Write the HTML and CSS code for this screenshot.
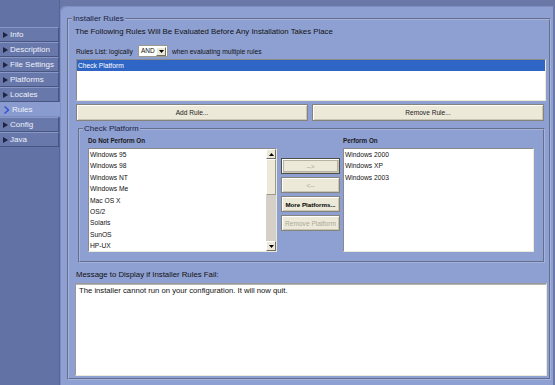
FILE: index.html
```html
<!DOCTYPE html>
<html lang="en">

<head>
    <meta charset="UTF-8">
    <meta name="viewport" content="width=device-width, initial-scale=1.0">
    <title>Installer Rules</title>
    <link rel="stylesheet" href="styles.css">
</head>

<body>
    <div class="app">
        <nav class="sidebar">
            <ul class="nav-list">
                <li class="nav-item"><span class="nav-arrow"></span>Info</li>
                <li class="nav-item"><span class="nav-arrow"></span>Description</li>
                <li class="nav-item"><span class="nav-arrow"></span>File Settings</li>
                <li class="nav-item"><span class="nav-arrow"></span>Platforms</li>
                <li class="nav-item"><span class="nav-arrow"></span>Locales</li>
                <li class="nav-item active">
                    <svg class="nav-open" width="5" height="8" viewBox="0 0 5 8">
                        <path d="M0.5 0.5 L4.5 4 L0.5 7.5" fill="none" stroke="#2f4fd8" stroke-width="1.3"/>
                    </svg>Rules
                </li>
                <li class="nav-item"><span class="nav-arrow"></span>Config</li>
                <li class="nav-item"><span class="nav-arrow"></span>Java</li>
            </ul>
        </nav>

        <main class="panel">
            <fieldset class="group rules-group">
                <legend>Installer Rules</legend>

                <p class="intro">The Following Rules Will Be Evaluated Before Any Installation Takes Place</p>

                <div class="logic-row">
                    <span>Rules List: logically</span>
                    <span class="combo">
                        <span class="combo-value">AND</span>
                        <span class="combo-btn">
                            <svg width="5" height="3" viewBox="0 0 5 3"><path d="M0 0 H5 L2.5 3 Z" fill="#000"/></svg>
                        </span>
                    </span>
                    <span>when evaluating multiple rules</span>
                </div>

                <div class="listbox rules-list">
                    <div class="list-row selected">Check Platform</div>
                </div>

                <div class="btn-row">
                    <button class="btn">Add Rule...</button>
                    <button class="btn">Remove Rule...</button>
                </div>

                <fieldset class="group platform-group">
                    <legend>Check Platform</legend>
                    <div class="platform-grid">
                        <div class="platform-col">
                            <div class="col-label">Do Not Perform On</div>
                            <div class="listbox platform-list">
                                <div class="list-items">
                                    <div class="list-row">Windows 95</div>
                                    <div class="list-row">Windows 98</div>
                                    <div class="list-row">Windows NT</div>
                                    <div class="list-row">Windows Me</div>
                                    <div class="list-row">Mac OS X</div>
                                    <div class="list-row">OS/2</div>
                                    <div class="list-row">Solaris</div>
                                    <div class="list-row">SunOS</div>
                                    <div class="list-row">HP-UX</div>
                                </div>
                                <div class="scrollbar">
                                    <div class="scroll-btn">
                                        <svg width="5" height="3" viewBox="0 0 5 3"><path d="M0 3 H5 L2.5 0 Z" fill="#000"/></svg>
                                    </div>
                                    <div class="scroll-thumb"></div>
                                    <div class="scroll-track"></div>
                                    <div class="scroll-btn">
                                        <svg width="5" height="3" viewBox="0 0 5 3"><path d="M0 0 H5 L2.5 3 Z" fill="#000"/></svg>
                                    </div>
                                </div>
                            </div>
                        </div>

                        <div class="move-buttons">
                            <button class="btn small default" disabled>--&gt;</button>
                            <button class="btn small" disabled>&lt;--</button>
                            <button class="btn small strong">More Platforms...</button>
                            <button class="btn small" disabled>Remove Platform</button>
                        </div>

                        <div class="platform-col">
                            <div class="col-label">Perform On</div>
                            <div class="listbox platform-list">
                                <div class="list-items">
                                    <div class="list-row">Windows 2000</div>
                                    <div class="list-row">Windows XP</div>
                                    <div class="list-row">Windows 2003</div>
                                </div>
                            </div>
                        </div>
                    </div>
                </fieldset>

                <div class="message-label">Message to Display if Installer Rules Fail:</div>
                <div class="message-box">The installer cannot run on your configuration. It will now quit.</div>
            </fieldset>
        </main>
    </div>
</body>

</html>
```

FILE: styles.css
```css
* {
    margin: 0;
    padding: 0;
    box-sizing: border-box;
}

body {
    width: 555px;
    height: 385px;
    overflow: hidden;
    background: #6a78a8;
    font-family: 'Liberation Sans', Arial, sans-serif;
    color: #111;
}

.app {
    display: grid;
    grid-template-columns: 60px 1fr;
    height: 385px;
}

/* left navigation */

.sidebar {
    background: #6272a4;
    padding-top: 27px;
    box-shadow: inset -1px 0 0 #55639a;
}

.nav-list {
    list-style: none;
}

.nav-item {
    display: flex;
    align-items: center;
    gap: 2px;
    width: 59px;
    height: 15px;
    padding-left: 3px;
    background: #6878aa;
    border-top: 1px solid #8797c7;
    border-bottom: 1px solid #48557f;
    border-right: 1px solid #48557f;
    color: #eef1fb;
    font-size: 8px;
    white-space: nowrap;
}

.nav-arrow {
    width: 0;
    height: 0;
    border-left: 5px solid #1f2440;
    border-top: 3.5px solid transparent;
    border-bottom: 3.5px solid transparent;
}

.nav-item.active {
    width: 60px;
    padding-left: 4px;
    gap: 3px;
    background: #8a9bcf;
    border-right: none;
    border-top-color: #8a9bcf;
    border-bottom-color: #7b8cc0;
}

/* main panel */

.panel {
    margin: 6px 2px 0 0;
    padding: 8px 2px 0 7px;
    background: #8ea0d2;
    border-top-left-radius: 6px;
    box-shadow: inset 1px 1px 0 #7c8ec2;
}

.group {
    border: 2px groove #a4b3dd;
    padding: 0;
    min-width: 0;
}

.group legend {
    margin-left: 3px;
    padding: 0 1px;
    font-size: 8px;
    line-height: 10px;
    color: #1d2340;
}

.rules-group {
    padding-bottom: 2px;
}

.intro {
    margin: 3px 0 0 6px;
    font-size: 7.8px;
    line-height: 10px;
}

.logic-row {
    display: flex;
    align-items: center;
    gap: 4px;
    height: 12px;
    margin: 8px 0 0 7px;
    font-size: 6.7px;
}

.logic-row > span:first-child {
    width: 58px;
}

.combo {
    display: flex;
    align-items: flex-start;
    width: 30px;
    height: 12px;
    background: #fff;
    border: 1px solid #9c9a8c;
    padding: 1px;
}

.combo-value {
    flex: 1;
    padding-left: 1px;
    font-size: 6.5px;
    line-height: 7px;
}

.combo-btn {
    display: flex;
    align-items: center;
    justify-content: center;
    width: 10px;
    height: 9px;
    background: #ece9d8;
    border: 1px solid;
    border-color: #fff #716f64 #716f64 #fff;
}

.listbox {
    background: #fff;
    border: 1px solid;
    border-color: #8a8a8a #ece9d8 #ece9d8 #8a8a8a;
}

.list-row {
    padding-left: 1px;
    font-size: 6.7px;
    line-height: 11.4px;
    white-space: nowrap;
}

.rules-list {
    height: 42px;
    margin: 2px 3px 0 7px;
}

.rules-list .list-row {
    background: #2f66c6;
    color: #fff;
    line-height: 11px;
}

.btn-row {
    display: grid;
    grid-template-columns: 1fr 1fr;
    gap: 4px;
    margin: 3px 5px 0 7px;
}

.btn {
    height: 17px;
    background: #ece9d8;
    border: 1px solid #85837a;
    box-shadow: inset 1px 1px 0 #fff, inset -1px -1px 0 #c8c5b4;
    font-family: 'Liberation Sans', Arial, sans-serif;
    font-size: 6.6px;
    color: #222;
}

.btn:disabled {
    color: #aca899;
}

.btn.small {
    height: 16px;
    width: 59px;
    white-space: nowrap;
    padding: 0;
}

.btn.default {
    border-color: #4e4d46;
    box-shadow: inset 1px 1px 0 #fff, inset -1px -1px 0 #c8c5b4, inset 0 0 0 2px #b6b3a3;
}

.btn.strong {
    color: #000;
    font-weight: bold;
    font-size: 6.2px;
}

/* check platform group */

.platform-group {
    margin: 3px 4px 0 9px;
}

.platform-grid {
    display: grid;
    grid-template-columns: 189px 59px 190px;
    column-gap: 4px;
    padding: 2px 9px 9px 8px;
}

.platform-grid > :last-child {
    margin-left: -1px;
}

.platform-col {
    display: flex;
    flex-direction: column;
    gap: 2px;
}

.col-label {
    font-size: 6.3px;
    font-weight: bold;
    line-height: 10px;
    color: #1a1a1a;
}

.platform-list {
    display: flex;
    height: 104px;
}

.list-items {
    flex: 1;
    padding-top: 0;
}

.scrollbar {
    display: flex;
    flex-direction: column;
    width: 10px;
    background: #d4d0c8;
}

.scroll-btn {
    display: flex;
    align-items: center;
    justify-content: center;
    height: 10px;
    background: #ece9d8;
    border: 1px solid;
    border-color: #fff #716f64 #716f64 #fff;
}

.scroll-thumb {
    height: 36px;
    background: #ece9d8;
    border: 1px solid;
    border-color: #fff #9d9a8a #9d9a8a #fff;
}

.scroll-track {
    flex: 1;
}

.move-buttons {
    display: flex;
    flex-direction: column;
    gap: 3px;
    padding-top: 22px;
}

/* failure message */

.message-label {
    margin: 7px 0 0 7px;
    font-size: 7.8px;
    line-height: 10px;
}

.message-box {
    height: 93px;
    margin: 3px 2px 0 6px;
    padding: 2px 3px;
    background: #fff;
    border: 1px solid;
    border-color: #999 #ece9d8 #ece9d8 #999;
    box-shadow: inset 0 1px 0 #b5b5b5;
    font-size: 7.7px;
    line-height: 10px;
}
```
